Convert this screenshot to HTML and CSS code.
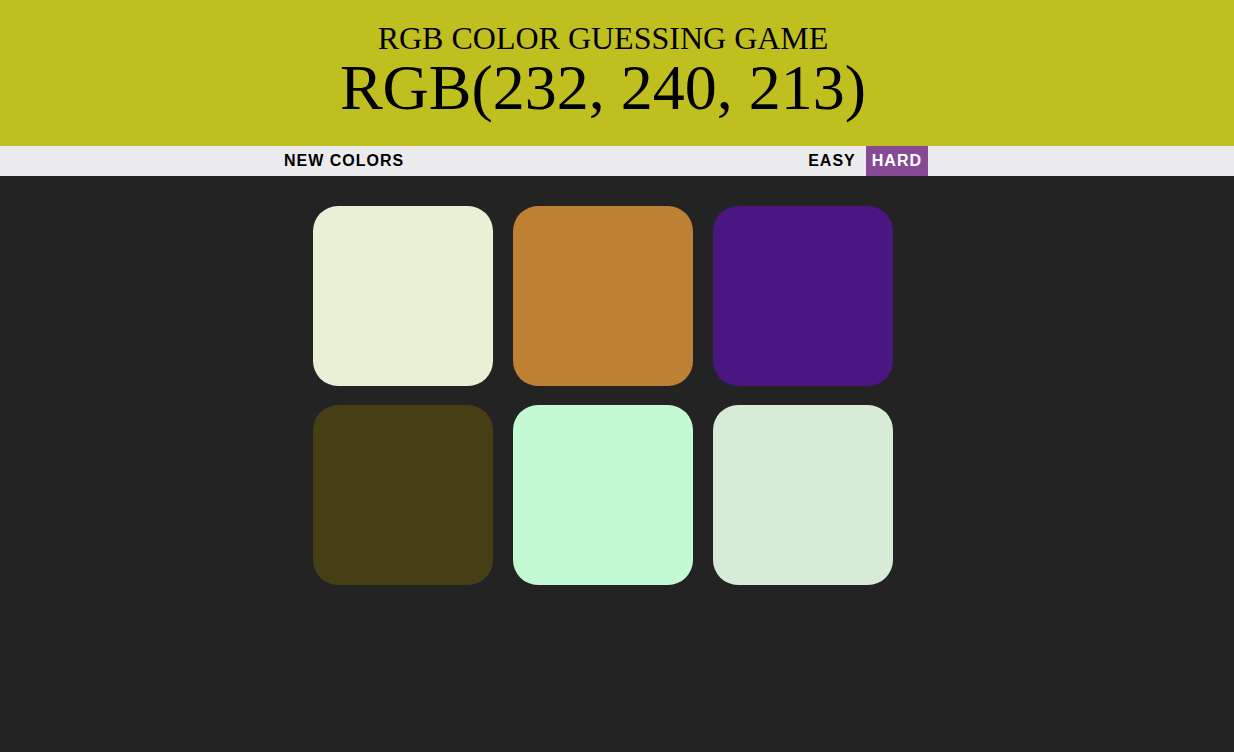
FILE: index.html
```html
<!DOCTYPE html>
<html lang="en">
<head>
    <meta charset="UTF-8">
    <title>RGB Color Guessing Game</title>
    <link rel="stylesheet" href="styles.css">
</head>
<body>

<h1 class="header">
    <span class="title">RGB COLOR GUESSING GAME</span>
    <span id="color-display">RGB(232, 240, 213)</span>
</h1>

<div class="stripe">
    <div class="stripe-inner">
        <button id="reset">NEW COLORS</button>
        <span id="message"></span>
        <div class="modes">
            <button class="mode">EASY</button>
            <button class="mode selected">HARD</button>
        </div>
    </div>
</div>

<div class="board">
    <div id="container">
        <div class="square" style="background-color: rgb(232, 240, 213);"></div>
        <div class="square" style="background-color: rgb(190, 128, 50);"></div>
        <div class="square" style="background-color: rgb(75, 21, 130);"></div>
        <div class="square" style="background-color: rgb(70, 63, 22);"></div>
        <div class="square" style="background-color: rgb(196, 250, 211);"></div>
        <div class="square" style="background-color: rgb(215, 235, 214);"></div>
    </div>
</div>

</body>
</html>
```

FILE: styles.css
```css
body {
    margin: 0;
    background-color: #232323;
    font-family: "Liberation Sans", Arial, sans-serif;
}

/* every band keeps 28px on the right so the content sits a bit left of centre */
.header,
.stripe,
.board {
    padding-right: 28px;
}

.header {
    margin: 0;
    height: 146px;
    box-sizing: border-box;
    padding-top: 21px;
    background-color: #bfc01f;
    color: #000;
    font-family: "Liberation Serif", "Times New Roman", serif;
    font-weight: normal;
    text-align: center;
    line-height: 1.1;
}

.header .title {
    display: block;
    font-size: 32px;
}

#color-display {
    display: block;
    font-size: 64px;
    line-height: 1;
}

.stripe {
    height: 30px;
    background-color: #ebeaec;
}

.stripe-inner {
    display: flex;
    align-items: stretch;
    justify-content: space-between;
    width: 650px;
    height: 100%;
    margin: 0 auto;
}

.stripe button {
    border: none;
    background: none;
    padding: 0 6px;
    height: 30px;
    font-family: "Liberation Sans", Arial, sans-serif;
    font-size: 16px;
    font-weight: bold;
    letter-spacing: 1px;
    text-transform: uppercase;
    color: #000;
    cursor: pointer;
}

.modes {
    display: flex;
    gap: 4px;
}

.stripe .selected {
    background-color: #874a95;
    color: #fff;
}

#container {
    display: grid;
    grid-template-columns: repeat(3, 180px);
    gap: 19px 20px;
    width: 580px;
    margin: 30px auto 0;
}

.square {
    height: 180px;
    border-radius: 25px;
}
```
